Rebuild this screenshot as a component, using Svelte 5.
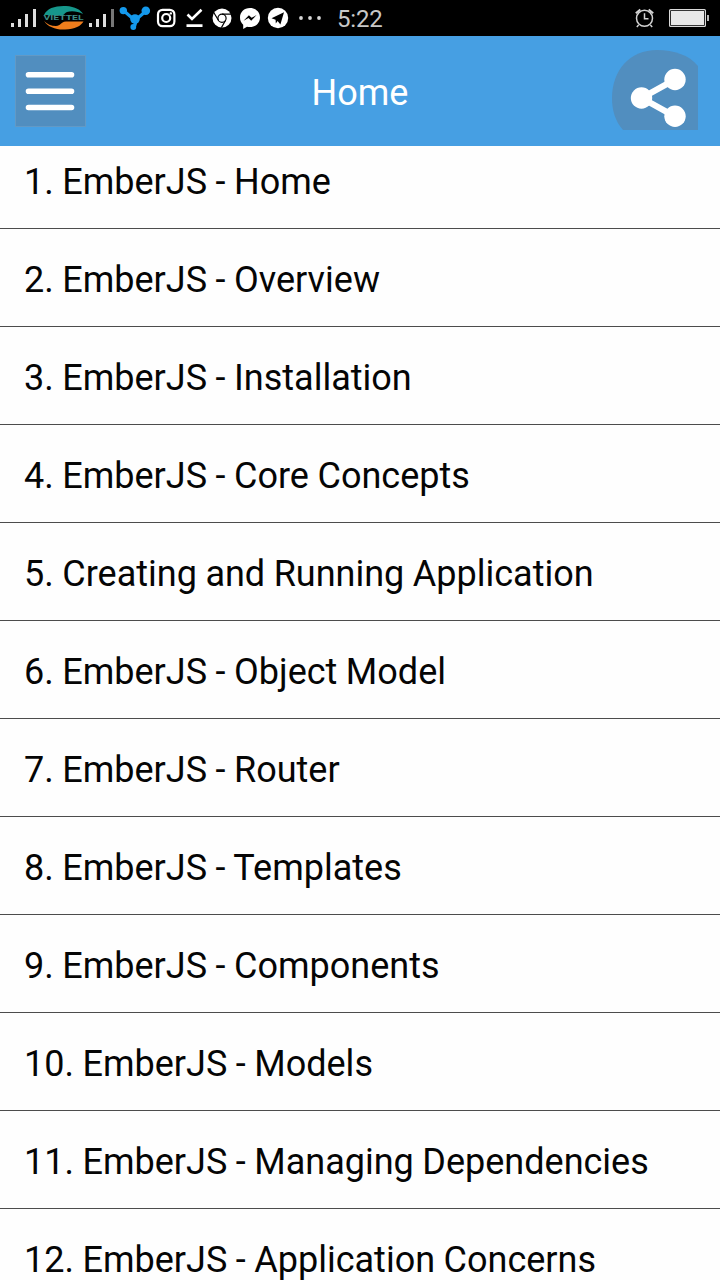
<script>
    let title = "Home";
    let time = "5:22";
    let chapters = [
        "EmberJS - Home",
        "EmberJS - Overview",
        "EmberJS - Installation",
        "EmberJS - Core Concepts",
        "Creating and Running Application",
        "EmberJS - Object Model",
        "EmberJS - Router",
        "EmberJS - Templates",
        "EmberJS - Components",
        "EmberJS - Models",
        "EmberJS - Managing Dependencies",
        "EmberJS - Application Concerns",
    ];
</script>

<div class="screen">
    <div class="status">
        <!-- signal, sim 1 -->
        <svg width="32" height="36" viewBox="8 0 32 36" fill="#dedede">
            <path d="M11 23h3v4h-3zM18 19h3v8h-3zM25 14h3v13h-3zM33 9h3v18h-3z" />
        </svg>
        <!-- carrier -->
        <svg width="47" height="36" viewBox="40 0 47 36">
            <path d="M44 15C47 8 56 5.500 66 6C75 6.500 81 10 83 14C78 11.500 72 10.500 67 12C64 13 65 15 61 15.500Z" fill="#16978b" />
            <path d="M44 21C48 27 56 30 65 29.500C75 29 81 26 83.500 21.500L66 21.500C60 22 61 26 56 26C51 26 47 24 44 21Z" fill="#ef7d1c" />
            <text x="43.500" y="20.300" class="carrier" textLength="40" lengthAdjust="spacingAndGlyphs">VIETTEL</text>
        </svg>
        <!-- signal, sim 2 -->
        <svg width="30" height="36" viewBox="87 0 30 36" fill="#dedede">
            <path d="M89 23h3v4h-3zM96 19h3v8h-3zM103 14h3v13h-3z" />
            <path d="M111 9h3v18h-3z" fill="#777" />
        </svg>
        <svg width="36" height="36" viewBox="117 0 36 36" fill="#1499ec">
            <path d="M124 11L131.500 17.500Q135 19.500 138.500 17.500L146 11M135 18Q137 23 133.500 27" fill="none" stroke="#1499ec" stroke-width="3.200" />
            <circle cx="123.300" cy="10.600" r="3.700" />
            <circle cx="145.800" cy="10.800" r="4.300" />
            <circle cx="135" cy="19" r="4.800" />
            <circle cx="133.300" cy="27" r="2.900" />
        </svg>
        <svg width="27" height="36" viewBox="153 0 27 36" fill="none" stroke="#fff" stroke-width="2.200">
            <rect x="158" y="9.800" width="16.400" height="16.400" rx="4.600" />
            <circle cx="166.200" cy="18" r="4" />
            <circle cx="170.800" cy="13.400" r="1.200" fill="#fff" stroke="none" />
        </svg>
        <svg width="28" height="36" viewBox="180 0 28 36" fill="none" stroke="#fff" stroke-width="2.600">
            <path d="M187.500 14.500l4.500 4.500l9.500-9.300M186.500 25.600h16" />
        </svg>
        <svg width="27" height="36" viewBox="208 0 27 36">
            <circle cx="222" cy="18" r="9.500" fill="#fff" />
            <g fill="none" stroke="#000" stroke-width="1.200">
                <circle cx="222" cy="18.300" r="4.100" />
                <path d="M222 14.200h9M218.400 20.300l-4.500-7.500M225.600 20.300l-4.200 7.300" />
            </g>
        </svg>
        <svg width="29" height="36" viewBox="235 0 29 36">
            <path d="M250 8C244 8 240 12.200 240 17.500C240 20.500 241.200 23 243.200 24.800V29L247 26.700C254.500 28.300 260 23.700 260 17.500C260 12 255.700 8 250 8Z" fill="#fff" />
            <path d="M243.600 20.700l5.300-5.500l2.700 2.600l5-2.700l-5.400 5.600l-2.700-2.700z" fill="#000" />
        </svg>
        <svg width="28" height="36" viewBox="264 0 28 36">
            <circle cx="278" cy="18" r="10.200" fill="#fff" />
            <path d="M271.500 18.200L284 12.200L280.400 24.500L277.600 21L275.800 23.500L275.600 19.700Z" fill="#000" />
        </svg>
        <svg width="38" height="36" viewBox="292 0 38 36" fill="#d8d8d8">
            <circle cx="301" cy="18" r="1.900" />
            <circle cx="310" cy="18" r="1.900" />
            <circle cx="319" cy="18" r="1.900" />
        </svg>
        <span class="time">{time}</span>
        <svg class="alarm" width="30" height="36" viewBox="630 0 30 36" fill="none" stroke="#d2d2d2" stroke-width="1.500">
            <circle cx="644.500" cy="18.300" r="8" />
            <path d="M644.500 13.200v5.600h4M638.600 25l-1.800 2M650.400 25l1.800 2" />
            <path d="M635.800 13.300l4.500-3.700M653.200 13.300l-4.500-3.700" stroke-width="2" />
        </svg>
        <svg width="60" height="36" viewBox="660 0 60 36">
            <rect x="669.600" y="9.600" width="35.800" height="16.800" rx="1" fill="none" stroke="#dadada" stroke-width="1.200" />
            <path d="M671 11h33v14h-33z" fill="#e9e9e9" />
            <path d="M707 15h2v6h-2z" fill="#bbb" />
        </svg>
    </div>

    <header>
        <button class="menu" aria-label="Menu">
            <svg width="71" height="72" viewBox="0 0 71 72" stroke="#fff" stroke-width="5.600" stroke-linecap="round">
                <path d="M13.500 19.700h43M13.500 36.200h43M13.500 52.500h43" />
            </svg>
        </button>
        <h1>{title}</h1>
        <button class="share" aria-label="Share">
            <svg width="86" height="80" viewBox="612 50 86 80">
                <path d="M623 130C615 121 612 110 612 98C612 70 630 50 657 50C674 50 689 55 698 66V130Z" fill="#518ebf" />
                <path d="M675 79.500L641.500 98L675 116.500" fill="none" stroke="#fff" stroke-width="6" />
                <g fill="#fff">
                    <circle cx="675" cy="79.500" r="10.700" />
                    <circle cx="641.500" cy="98" r="10.700" />
                    <circle cx="675" cy="116.300" r="10.700" />
                </g>
            </svg>
        </button>
    </header>

    <ul>
        {#each chapters as chapter, i}
            <li>{i + 1}. {chapter}</li>
        {/each}
    </ul>
</div>

<style>
    :global(body) {
        background-color: #fefefe;
        overflow: hidden;
    }
    .screen {
        display: flex;
        flex-direction: column;
        height: 1280px;
        overflow: hidden;
        font-family: Roboto, "Liberation Sans", sans-serif;
    }
    svg {
        display: block;
        flex: none;
    }
    .status {
        display: flex;
        flex: none;
        height: 36px;
        padding-left: 8px;
        background-color: #000;
    }
    .carrier {
        fill: #3c8c85;
        font-size: 6.5px;
        font-weight: bold;
    }
    .time {
        margin-left: 7px;
        color: #c8c8c8;
        font-size: 24px;
        letter-spacing: -0.2px;
        line-height: 38px;
    }
    .alarm {
        margin-left: auto;
    }
    header {
        display: grid;
        grid-template-columns: 1fr auto 1fr;
        flex: none;
        height: 110px;
        background-color: #469fe3;
    }
    button {
        border: none;
        padding: 0;
        background: none;
    }
    .menu {
        justify-self: start;
        align-self: start;
        margin: 19px 0 0 15px;
        background-color: #518ebf;
        box-shadow: inset 0 0 0 1px #6299c5;
    }
    .share {
        justify-self: end;
        align-self: start;
        margin: 14px 22px 0 0;
    }
    h1 {
        margin: 0;
        color: #fff;
        font-size: 36px;
        font-weight: normal;
        line-height: 115px;
    }
    ul {
        margin: 0;
        padding: 0;
        list-style: none;
    }
    li {
        height: 97px;
        padding-left: 24px;
        border-bottom: 1px solid #4c4c4c;
        color: #050505;
        font-size: 36px;
        line-height: 103px;
        word-spacing: -0.4px;
        white-space: nowrap;
    }
    /* the first row starts scrolled a little under the header */
    li:first-child {
        height: 82px;
        line-height: 73px;
    }
</style>
